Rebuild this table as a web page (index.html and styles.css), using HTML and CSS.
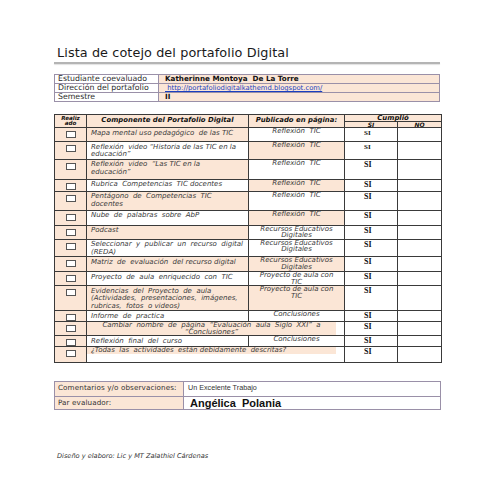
FILE: index.html
```html
<!DOCTYPE html>
<html lang="es">
<head>
<meta charset="utf-8">
<title>Lista de cotejo del portafolio Digital</title>
<link rel="stylesheet" href="styles.css">
</head>
<body>
<div class="page">
  <h1 class="title">Lista de cotejo del portafolio Digital</h1>
  <div class="rule"></div>

  <table class="info">
    <tr><td class="lbl">Estudiante coevaluado</td><td class="val strong">Katherinne Montoya&nbsp; De La Torre</td></tr>
    <tr><td class="lbl">Dirección del portafolio</td><td class="val"><a class="link" href="#">&nbsp;http://portafoliodigitalkathemd.blogspot.com/</a></td></tr>
    <tr><td class="lbl">Semestre</td><td class="val strong">II</td></tr>
  </table>

  <table class="check">
    <colgroup>
      <col class="c-real"><col class="c-comp"><col class="c-pub"><col class="c-si"><col class="c-no">
    </colgroup>
    <tr class="hd1">
      <th rowspan="2" class="realiz">Realiz<br>ado</th>
      <th rowspan="2" class="hcomp">Componente del Portafolio Digital</th>
      <th rowspan="2" class="hpub">Publicado en página:</th>
      <th colspan="2" class="hcum">Cumplió</th>
    </tr>
    <tr class="hd2"><th class="hsi">SI</th><th class="hno">NO</th></tr>

    <tr class="h14"><td class="box"><span></span></td><td class="comp pk">Mapa mental uso pedagógico&nbsp; de las TIC</td><td class="pub">Reflexión&nbsp; TIC</td><td class="si sm">SI</td><td></td></tr>
    <tr class="h17"><td class="box"><span></span></td><td class="comp">Reflexión&nbsp; video “Historia de las TIC en la educación”</td><td class="pub pk">Reflexión&nbsp; TIC</td><td class="si sm">SI</td><td></td></tr>
    <tr class="h20"><td class="box"><span></span></td><td class="comp pk">Reflexión&nbsp; video&nbsp; “Las TIC en la<br>educación”</td><td class="pub">Reflexión&nbsp; TIC</td><td class="si">SI</td><td></td></tr>
    <tr class="h12"><td class="box"><span></span></td><td class="comp">Rubrica&nbsp; Competencias&nbsp; TIC docentes</td><td class="pub pk">Reflexión&nbsp; TIC</td><td class="si">SI</td><td></td></tr>
    <tr class="h19"><td class="box"><span></span></td><td class="comp pk">Pentágono&nbsp; de&nbsp; Competencias&nbsp; TIC docentes</td><td class="pub">Reflexión&nbsp; TIC</td><td class="si">SI</td><td></td></tr>
    <tr class="h15"><td class="box"><span></span></td><td class="comp">Nube&nbsp; de&nbsp; palabras&nbsp; sobre&nbsp; AbP</td><td class="pub pk">Reflexión&nbsp; TIC</td><td class="si">SI</td><td></td></tr>
    <tr class="h14"><td class="box"><span></span></td><td class="comp pk">Podcast</td><td class="pub">Recursos Educativos Digitales</td><td class="si">SI</td><td></td></tr>
    <tr class="h16"><td class="box"><span></span></td><td class="comp">Seleccionar&nbsp; y&nbsp; publicar&nbsp; un&nbsp; recurso&nbsp; digital (REDA)</td><td class="pub">Recursos Educativos Digitales</td><td class="si">SI</td><td></td></tr>
    <tr class="h15"><td class="box"><span></span></td><td class="comp pk">Matriz&nbsp; de&nbsp; evaluación&nbsp; del recurso digital</td><td class="pub pk">Recursos Educativos Digitales</td><td class="si">SI</td><td></td></tr>
    <tr class="h14"><td class="box"><span></span></td><td class="comp">Proyecto&nbsp; de&nbsp; aula&nbsp; enriquecido&nbsp; con&nbsp; TIC</td><td class="pub">Proyecto de aula con<br>TIC</td><td class="si">SI</td><td></td></tr>
    <tr class="h25"><td class="box"><span></span></td><td class="comp pk">Evidencias&nbsp; del&nbsp; Proyecto&nbsp; de&nbsp; aula (Actividades,&nbsp; presentaciones,&nbsp; imágenes, rubricas,&nbsp; fotos&nbsp; o videos)</td><td class="pub pk">Proyecto de aula con<br>TIC</td><td class="si">SI</td><td></td></tr>
    <tr class="h10"><td class="box"><span></span></td><td class="comp">Informe&nbsp; de&nbsp; practica</td><td class="pub">Conclusiones</td><td class="si">SI</td><td></td></tr>
    <tr class="h14"><td class="box"><span></span></td><td colspan="2" class="span"><div class="band center">Cambiar&nbsp; nombre&nbsp; de&nbsp; página&nbsp; “Evaluación&nbsp; aula&nbsp; Siglo&nbsp; XXI”&nbsp; a<br><u>“Conclusiones”</u></div></td><td class="si">SI</td><td></td></tr>
    <tr class="h11"><td class="box"><span></span></td><td class="comp">Reflexión&nbsp; final&nbsp; del&nbsp; curso</td><td class="pub">Conclusiones</td><td class="si">SI</td><td></td></tr>
    <tr class="h16"><td class="box"><span></span></td><td colspan="2" class="span"><div class="band">¿Todas&nbsp; las&nbsp; actividades&nbsp; están debidamente&nbsp; descritas?</div></td><td class="si">SI</td><td></td></tr>
  </table>

  <table class="eval">
    <tr><td class="elbl">Comentarios y/o observaciones:</td><td class="eval-val">Un Excelente Trabajo</td></tr>
    <tr><td class="elbl">Par evaluador:</td><td class="eval-val name">Angélica&nbsp; Polania</td></tr>
  </table>

  <p class="footer">Diseño y elaboro: Lic y MT Zalathiel Cárdenas</p>
</div>
</body>
</html>
```

FILE: styles.css
```css
html, body {
  margin: 0;
  padding: 0;
  background: #ffffff;
}

body {
  font-family: "DejaVu Sans", Verdana, sans-serif;
  color: #333;
}

.page {
  width: 388px;
  padding: 45px 0 0 54px;
}

.title {
  margin: 0 0 0 3px;
  font-size: 12.8px;
  line-height: 16px;
  font-weight: normal;
  color: #1a1a1a;
  letter-spacing: 0.1px;
}

.rule {
  margin-top: 1px;
  width: 386px;
  height: 2px;
  background: #b4b4b4;
  box-shadow: 0 1px 1px #e2e2e2;
}

/* ---------- info table ---------- */
.info {
  margin-top: 10px;
  width: 386px;
  border-collapse: collapse;
  font-size: 7.8px;
}

.info td {
  border: 1px solid #9a90a8;
  height: 8px;
  padding: 0 3px;
  line-height: 8px;
  white-space: nowrap;
}

.info .lbl {
  width: 97px;
  color: #2a2a2a;
}

.info .val {
  background: #fbe6d6;
  padding-left: 6px;
  font-size: 7.2px;
}

.info .strong {
  font-weight: bold;
  color: #111;
}

.link {
  color: #1a3fc0;
  text-decoration: underline;
  font-size: 6.8px;
}

/* ---------- checklist ---------- */
.check {
  margin-top: 12px;
  width: 387px;
  border-collapse: collapse;
  table-layout: fixed;
  border: 1px solid #222;
}

.c-real { width: 32px; }
.c-comp { width: 162px; }
.c-pub { width: 96px; }
.c-si { width: 53px; }
.c-no { width: 44px; }

.check th,
.check td {
  border: 1px solid #3a3a3a;
  padding: 0;
  vertical-align: top;
}

.check th {
  background: #fbe6d6;
  font-style: italic;
  font-weight: bold;
  color: #111;
  font-size: 6.9px;
  line-height: 6px;
}

.hd1 { height: 6px; }
.hd2 { height: 6px; }

.realiz {
  font-size: 5.6px !important;
  line-height: 5px !important;
  padding-top: 1px !important;
}

.hcomp,
.hpub {
  padding-top: 1px !important;
  line-height: 8px !important;
}

.hcum {
  line-height: 6px !important;
}

.hsi,
.hno {
  font-size: 6px !important;
  line-height: 5px !important;
}

.check td {
  font-style: italic;
  font-size: 7px;
  line-height: 7.5px;
  color: #3a3a3a;
}

.box {
  background: #fbe6d6;
}

.box span {
  display: block;
  width: 8px;
  height: 5px;
  margin: 3px auto 0;
  border: 1px solid #555;
  background: #fff;
}

.comp {
  padding: 1.5px 4px 0 4px !important;
}

.pub {
  text-align: center;
  padding: 0 3px !important;
  line-height: 6.5px !important;
}

.pk {
  background: #fbe6d6;
}

.si {
  font-family: "Liberation Serif", "Times New Roman", serif;
  font-style: normal !important;
  font-weight: bold;
  font-size: 8px !important;
  line-height: 8px !important;
  color: #111 !important;
  padding: 1px 0 0 19px !important;
}

.si.sm {
  font-size: 7px !important;
}

.span {
  padding: 0 8px 0 0 !important;
}

.band {
  background: #fbe6d6;
  padding: 0 4px;
  line-height: 6.5px;
}

.band.center {
  text-align: center;
}

.band u {
  text-decoration: underline;
}

.h10 { height: 10px; }
.h11 { height: 11px; }
.h12 { height: 12px; }
.h14 { height: 14px; }
.h15 { height: 15px; }
.h16 { height: 16px; }
.h17 { height: 17px; }
.h19 { height: 19px; }
.h20 { height: 20px; }
.h25 { height: 25px; }

/* ---------- evaluator table ---------- */
.eval {
  margin-top: 18px;
  width: 387px;
  border-collapse: collapse;
}

.eval td {
  border: 1px solid #9a90a8;
  vertical-align: top;
  padding: 1px 3px 0 3px;
  font-size: 7.2px;
  color: #333;
}

.eval tr:first-child td { height: 13px; }
.eval tr:last-child td { height: 11px; }

.elbl {
  width: 122px;
  background: #fbe6d6;
  white-space: nowrap;
  letter-spacing: 0.1px;
}

.eval-val {
  font-family: "Liberation Sans", Arial, sans-serif;
  padding-left: 4px !important;
}

.name {
  font-weight: bold;
  font-size: 11px !important;
  color: #111 !important;
  padding-left: 6px !important;
  line-height: 11px;
}

.footer {
  margin: 42px 0 0 3px;
  font-style: italic;
  font-size: 6.6px;
  color: #333;
}
```
